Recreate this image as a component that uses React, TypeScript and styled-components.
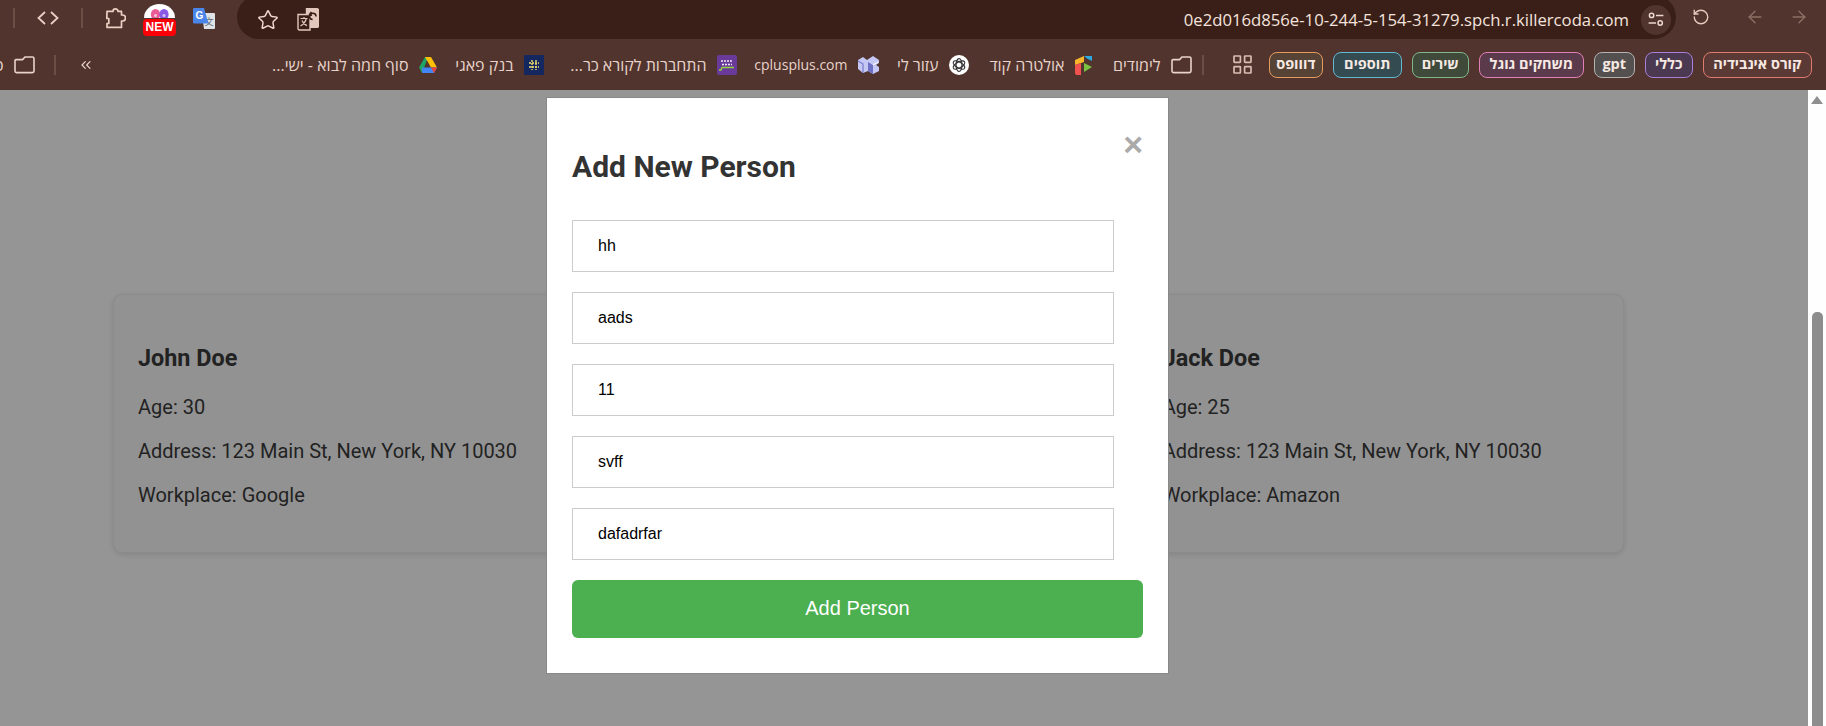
import React from "react";
import styled, { createGlobalStyle } from "styled-components";
import { ArrowLeft, ArrowRight, ChevronsRight, RotateCcw, Star } from "lucide-react";

const chips = [
  { label: "קורס אינבידיה", border: "#df7b6e", bg: "#5b3a35", width: 110 },
  { label: "כללי", border: "#a97fdc", bg: "#4a3950", width: 48 },
  { label: "gpt", border: "#b3b3b3", bg: "#54504f", width: 42 },
  { label: "משחקים גוגל", border: "#e27fb7", bg: "#5a3a4b", width: 105 },
  { label: "שירים", border: "#7fb98a", bg: "#3f4a3a", width: 58 },
  { label: "תוספים", border: "#63b9d2", bg: "#344b51", width: 69 },
  { label: "דווופס", border: "#e69b5e", bg: "#564335", width: 55 },
];

const people = [
  { name: "John Doe", age: 30, address: "123 Main St, New York, NY 10030", work: "Google" },
  { name: "Jane Doe", age: 28, address: "123 Main St, New York, NY 10030", work: "Microsoft" },
  { name: "Jack Doe", age: 25, address: "123 Main St, New York, NY 10030", work: "Amazon" },
];

const fields = ["hh", "aads", "11", "svff", "dafadrfar"];

const FolderIcon = () => (
  <svg width="21" height="18" viewBox="0 0 21 18" fill="none" stroke="#e9d3ca" strokeWidth="1.6">
    <path d="M1 4.5 V15 a1.6 1.6 0 0 0 1.6 1.6 H18.4 a1.6 1.6 0 0 0 1.6 -1.6 V2.6 A1.6 1.6 0 0 0 18.4 1 H11 L8.5 3.6 H2 Q1 3.6 1 4.5 Z" />
  </svg>
);

const GridIcon = () => (
  <svg width="19" height="19" viewBox="0 0 19 19" fill="none" stroke="#d9bdb2" strokeWidth="1.7">
    <rect x="1" y="1" width="6.4" height="6.4" rx="0.6" />
    <rect x="11.6" y="1" width="6.4" height="6.4" rx="0.6" />
    <rect x="1" y="11.6" width="6.4" height="6.4" rx="0.6" />
    <rect x="11.6" y="11.6" width="6.4" height="6.4" rx="0.6" />
  </svg>
);

const CodeIcon = () => (
  <svg width="22" height="14" viewBox="0 0 22 14" fill="none" stroke="#eccfc4" strokeWidth="1.8">
    <path d="M8 1 L1.5 7 L8 13 M14 1 L20.5 7 L14 13" />
  </svg>
);

const PuzzleIcon = () => (
  <svg width="21" height="21" viewBox="0 0 21 21" fill="none" stroke="#eccfc4" strokeWidth="1.7" strokeLinejoin="round">
    <path d="M2 3.4 H8 a2.5 2.5 0 0 1 5 0 H16.5 V7 H17.5 a2.9 2.9 0 0 1 0 6 H16.5 V19.4 H2 V15.5 H3.8 V10.5 H1.8 Z" />
  </svg>
);

const DomeLogo = () => (
  <svg width="31" height="14" viewBox="0 0 31 14">
    <defs>
      <clipPath id="dome-clip">
        <path d="M0 14 A15.5 14 0 0 1 31 14 Z" />
      </clipPath>
    </defs>
    <path d="M0 14 A15.5 14 0 0 1 31 14 Z" fill="#fff" />
    <g clipPath="url(#dome-clip)">
      <ellipse cx="11.5" cy="10.5" rx="4.6" ry="5.5" fill="#ea5a94" />
      <ellipse cx="20" cy="10.5" rx="4.6" ry="5.5" fill="#8a58e4" />
      <circle cx="11.5" cy="11.5" r="1.5" fill="#f6c6dc" />
      <circle cx="20" cy="11.5" r="1.5" fill="#d6c4f6" />
    </g>
  </svg>
);

const TranslateLogo = () => (
  <svg width="22" height="21" viewBox="0 0 22 21">
    <path d="M9 5 H21 a1 1 0 0 1 1 1 V20 a1 1 0 0 1 -1 1 H11 Z" fill="#dfe3e6" />
    <text x="16" y="17" fontSize="9" fill="#5b6670" textAnchor="middle" fontFamily="Noto Sans CJK SC, sans-serif">文</text>
    <path d="M1.2 0 H11 L15.5 15.5 H1.2 A1.2 1.2 0 0 1 0 14.3 V1.2 A1.2 1.2 0 0 1 1.2 0 Z" fill="#4a86ea" />
    <text x="6.5" y="11" fontSize="10" fontWeight="700" fill="#fff" textAnchor="middle" fontFamily="Liberation Sans, sans-serif">G</text>
  </svg>
);

const PageTranslateIcon = () => (
  <svg width="22" height="23" viewBox="0 0 22 23" fill="none" stroke="#e3c7bc" strokeWidth="1.4">
    <path d="M9.5 0.7 H20 A1.4 1.4 0 0 1 21.4 2.1 V18 A1.4 1.4 0 0 1 20 19.4 H13 V6 H9.5 Z" fill="#e3c7bc" />
    <path d="M1 6.5 H13 V22 H2.4 A1.4 1.4 0 0 1 1 20.6 Z" fill="#3a1f19" />
    <path d="M3.5 10.5 H10.5 M7 9 V10.5 M9.3 10.5 C8.5 14 6.5 16.3 3.5 18 M5 12.5 C6 15 7.8 16.8 10 17.6" strokeWidth="1.2" />
    <path d="M19 8.5 A3.2 3.2 0 1 0 15.6 11.6 M14.5 4 L12.6 6.2 L15 7.4" stroke="#3a1f19" strokeWidth="1.5" />
  </svg>
);

const TuneIcon = () => (
  <svg width="16" height="15" viewBox="0 0 16 15" fill="none" stroke="#ecd6cd" strokeWidth="1.5">
    <circle cx="3.6" cy="3.4" r="2.2" />
    <path d="M8 3.4 H15.4 M0.6 11 H8" />
    <circle cx="12.2" cy="11" r="2.2" />
  </svg>
);

const DriveLogo = () => (
  <svg width="18" height="16" viewBox="0 0 18 16">
    <path d="M6 0 H9 L3.2 16 L0 10.4 Z" fill="#1fa463" />
    <path d="M6 0 H12 L18 10.4 H12 Z" fill="#ffc107" />
    <path d="M3.2 10.4 H18 L15 16 H3 Z" fill="#4285f4" />
    <path d="M12 10.4 H18 L15 16 Z" fill="#e94335" />
  </svg>
);

const BankLogo = () => (
  <svg width="20" height="20" viewBox="0 0 20 20">
    <rect width="20" height="20" rx="1" fill="#14285f" />
    <g fill="none" stroke="#f4e16c" strokeWidth="1.4">
      <path d="M8 5 V15 M12 5 V15 M5 8 H15 M5 12 H15" strokeDasharray="2 1" />
    </g>
  </svg>
);

const ReaderLogo = () => (
  <svg width="20" height="20" viewBox="0 0 20 20">
    <rect width="20" height="20" rx="2" fill="#6a3a9a" />
    <path d="M4 6 H16 M5 9.5 H15" stroke="#f0e9f5" strokeWidth="1.6" strokeDasharray="2 1" />
    <path d="M2 15 H4 L5 12.5 H17" fill="none" stroke="#8ed23c" strokeWidth="1.4" />
  </svg>
);

const CplusplusLogo = () => (
  <svg width="21" height="18" viewBox="0 0 21 18">
    <path d="M0 4 L5 1 L9 4 L15 0 L21 4 V7 L18 9 L21 11 V15 L15 18 L10 15 L5 17 L0 13 Z" fill="#c5c8f5" />
    <path d="M10 6 L15 9 V18 L10 15 Z" fill="#6d70c4" />
    <path d="M0 5 L5 8 V17" fill="none" stroke="#8285d0" strokeWidth="1.4" />
    <path d="M15 9 L20 6" fill="none" stroke="#f4f4ff" strokeWidth="1.4" />
  </svg>
);

const GptLogo = () => (
  <svg width="20" height="20" viewBox="0 0 20 20">
    <circle cx="10" cy="10" r="10" fill="#fff" />
    <g fill="none" stroke="#333" strokeWidth="1.2">
      <ellipse cx="10" cy="10" rx="3" ry="6.4" />
      <ellipse cx="10" cy="10" rx="3" ry="6.4" transform="rotate(60 10 10)" />
      <ellipse cx="10" cy="10" rx="3" ry="6.4" transform="rotate(120 10 10)" />
    </g>
  </svg>
);

const AlteraLogo = () => (
  <svg width="17" height="20" viewBox="0 0 17 20">
    <path d="M0 5 L9 1 V7 L0 10 Z" fill="#f8b62b" />
    <path d="M9 1 L17 1 V6 L12 3.5 Z" fill="#2fa8e0" />
    <path d="M0 10 L6 8 V20 H2 Q0 20 0 18 Z" fill="#f0524f" />
    <path d="M9 8 L17 12 L9 17 Z" fill="#7cc242" />
  </svg>
);

const bookmarks = [
  { label: "לימודים", icon: <FolderIcon />, width: 48, size: 16, after: 11 },
  { label: "אולטרה קוד", icon: <AlteraLogo />, width: 76, size: 16, after: 10 },
  { label: "עזור לי", icon: <GptLogo />, width: 41, size: 16, after: 9 },
  { label: "cplusplus.com", icon: <CplusplusLogo />, width: 91, size: 14, after: 10 },
  { label: "התחברות לקורא כר...", icon: <ReaderLogo />, width: 138, size: 16, after: 15 },
  { label: "בנק פאגי", icon: <BankLogo />, width: 56, size: 16, after: 11 },
  { label: "סוף חמה לבוא - ישי...", icon: <DriveLogo />, width: 136, size: 16, after: 0 },
];

const App = () => (
  <Shell>
    <GlobalStyle />
    <TopBar>
      <ToolSide>
        <Divider />
        <ToolIcon $left={22} $right={22}>
          <CodeIcon />
        </ToolIcon>
        <Divider />
        <ToolIcon $left={22} $right={0}>
          <PuzzleIcon />
        </ToolIcon>
        <NewExtension>
          <DomeLogo />
          <NewBadge>NEW</NewBadge>
        </NewExtension>
        <ToolIcon $left={17} $right={0}>
          <TranslateLogo />
        </ToolIcon>
      </ToolSide>
      <AddressPill>
        <PillIcons>
          <Star size={22} strokeWidth={1.6} color="#f0d9cf" />
          <PageTranslateIcon />
        </PillIcons>
        <Url>0e2d016d856e-10-244-5-154-31279.spch.r.killercoda.com</Url>
        <TuneButton>
          <TuneIcon />
        </TuneButton>
      </AddressPill>
      <NavSide>
        <RotateCcw size={18} strokeWidth={1.8} color="#e8c9bd" />
        <BackArrow>
          <ArrowLeft size={20} strokeWidth={1.7} color="#8d6f65" />
        </BackArrow>
        <ArrowRight size={20} strokeWidth={1.7} color="#8d6f65" />
      </NavSide>
    </TopBar>
    <BookmarkBar>
      {chips.map((chip) => (
        <Chip key={chip.label} $border={chip.border} $bg={chip.bg} $width={chip.width}>
          {chip.label}
        </Chip>
      ))}
      <AppsSlot>
        <GridIcon />
      </AppsSlot>
      <Divider />
      {bookmarks.map((item) => (
        <Bookmark key={item.label} $after={item.after}>
          {item.icon}
          <BookmarkLabel $width={item.width} $size={item.size}>
            {item.label}
          </BookmarkLabel>
        </Bookmark>
      ))}
      <MoreSlot>
        <ChevronsRight size={16} strokeWidth={1.8} color="#e9d3ca" style={{ transform: "scaleX(-1)" }} />
      </MoreSlot>
      <EndDivider />
      <Bookmark $after={0}>
        <FolderIcon />
        <BookmarkLabel $width={60} $size={16}>
          סרטונים
        </BookmarkLabel>
      </Bookmark>
    </BookmarkBar>
    <Viewport>
      <Page>
        <CardGrid>
          {people.map((person) => (
            <Card key={person.name}>
              <CardName>{person.name}</CardName>
              <CardLine>Age: {person.age}</CardLine>
              <CardLine>Address: {person.address}</CardLine>
              <CardLine>Workplace: {person.work}</CardLine>
            </Card>
          ))}
        </CardGrid>
        <Overlay>
          <Modal>
            <CloseButton>×</CloseButton>
            <ModalTitle>Add New Person</ModalTitle>
            <Form>
              {fields.map((value) => (
                <Field key={value} type="text" defaultValue={value} />
              ))}
              <Submit type="button">Add Person</Submit>
            </Form>
          </Modal>
        </Overlay>
      </Page>
      <Scrollbar>
        <ScrollArrow />
        <ScrollThumb />
      </Scrollbar>
    </Viewport>
  </Shell>
);

export default App;

const GlobalStyle = createGlobalStyle`
  html, body {
    margin: 0;
    height: 100%;
    overflow: hidden;
    background: #959595;
  }
  * {
    box-sizing: border-box;
  }
`;

const Shell = styled.div`
  display: flex;
  flex-direction: column;
  height: 726px;
  width: 1826px;
  overflow: hidden;
  font-family: "Open Sans", "Liberation Sans", sans-serif;
`;

const TopBar = styled.div`
  display: flex;
  align-items: flex-start;
  height: 39px;
  background: #50342d;
  flex-shrink: 0;
`;

const ToolSide = styled.div`
  display: flex;
  align-items: center;
  height: 36px;
  width: 237px;
  padding-left: 13px;
`;

const Divider = styled.div`
  width: 2px;
  height: 20px;
  background: #6c4e45;
  flex-shrink: 0;
`;

const EndDivider = styled(Divider)`
  margin-left: 9px;
`;

const ToolIcon = styled.div<{ $left: number; $right: number }>`
  display: flex;
  align-items: center;
  justify-content: center;
  margin: 0 ${(p) => p.$right}px 0 ${(p) => p.$left}px;
`;

const NewExtension = styled.div`
  display: flex;
  flex-direction: column;
  align-items: center;
  width: 33px;
  height: 33px;
  margin-left: 17px;
  align-self: flex-start;
  margin-top: 4px;
`;

const NewBadge = styled.div`
  width: 33px;
  height: 17px;
  margin-top: 1px;
  border-radius: 4px;
  background: #fb0007;
  color: #fff;
  font: 700 12px/17px "Liberation Sans", sans-serif;
  text-align: center;
`;

const AddressPill = styled.div`
  display: flex;
  align-items: center;
  width: 1439px;
  height: 44px;
  margin-top: -5px;
  padding: 0 5px 0 20px;
  border-radius: 22px;
  background: #3a1f19;
  flex-shrink: 0;
`;

const PillIcons = styled.div`
  display: flex;
  align-items: center;
  gap: 18px;
  margin-top: 5px;
`;

const Url = styled.div`
  flex: 1;
  margin-top: 5px;
  padding-right: 12px;
  text-align: right;
  font-size: 16.7px;
  color: #f4e4dd;
  white-space: nowrap;
`;

const TuneButton = styled.div`
  display: flex;
  align-items: center;
  justify-content: center;
  width: 30px;
  height: 30px;
  margin-top: 5px;
  border-radius: 50%;
  background: #50342d;
`;

const NavSide = styled.div`
  display: flex;
  align-items: center;
  height: 34px;
  flex: 1;
  padding-left: 16px;
  gap: 24px;
`;

const BackArrow = styled.div`
  display: flex;
  margin-left: 11px;
`;

const BookmarkBar = styled.div`
  display: flex;
  direction: rtl;
  align-items: center;
  height: 51px;
  padding: 0 14px 0 0;
  gap: 10px;
  background: #50342d;
  overflow: hidden;
  flex-shrink: 0;
`;

const Chip = styled.div<{ $border: string; $bg: string; $width: number }>`
  width: ${(p) => p.$width - 0.5}px;
  height: 26px;
  border: 1.5px solid ${(p) => p.$border};
  border-radius: 8px;
  background: ${(p) => p.$bg};
  color: #f6e9e3;
  font-size: 14.5px;
  font-weight: 700;
  line-height: 22px;
  text-align: center;
  white-space: nowrap;
  flex-shrink: 0;
`;

const AppsSlot = styled.div`
  display: flex;
  margin: 0 7px 0 19px;
  flex-shrink: 0;
`;

const Bookmark = styled.div<{ $after: number }>`
  display: flex;
  align-items: center;
  gap: 10px;
  margin-left: ${(p) => p.$after}px;
  color: #e7d3cb;
  white-space: nowrap;
  flex-shrink: 0;
`;

const BookmarkLabel = styled.span<{ $width: number; $size: number }>`
  display: block;
  width: ${(p) => p.$width}px;
  font-size: ${(p) => p.$size}px;
`;

const MoreSlot = styled.div`
  display: flex;
  margin: 0 169px 0 12px;
  flex-shrink: 0;
`;

const Viewport = styled.div`
  display: flex;
  flex: 1;
  min-height: 0;
`;

const Page = styled.div`
  position: relative;
  flex: 1;
  padding: 204px 184px 0 113px;
  background: #959595;
`;

const CardGrid = styled.div`
  display: grid;
  grid-template-columns: repeat(3, 1fr);
  gap: 26px;
  font-family: Roboto, sans-serif;
`;

const Card = styled.div`
  height: 259px;
  padding: 50px 24px 0;
  border: 1px solid #8b8b8b;
  border-radius: 9px;
  background: #929292;
  box-shadow: 0 2px 5px rgba(0, 0, 0, 0.1);
  color: #222;
`;

const CardName = styled.h3`
  margin: 0 0 24px;
  font-size: 23.4px;
  line-height: 26px;
  font-weight: 700;
`;

const CardLine = styled.p`
  margin: 0 0 20px;
  font-size: 20px;
  line-height: 24px;
`;

const Overlay = styled.div`
  position: absolute;
  inset: 0;
  padding: 7px 0 0 546px;
`;

const Modal = styled.div`
  position: relative;
  width: 623px;
  height: 577px;
  padding: 0 25px;
  border: 1px solid #888;
  background: #fff;
`;

const CloseButton = styled.div`
  position: absolute;
  top: 26px;
  right: 25px;
  color: #aaa;
  font: 700 34px/40px "Liberation Sans", sans-serif;
`;

const ModalTitle = styled.h2`
  margin: 0;
  padding: 52px 0 36px;
  color: #333;
  font: 700 30px/34px Roboto, sans-serif;
`;

const Form = styled.div`
  display: flex;
  flex-direction: column;
  align-items: flex-start;
  gap: 20px;
`;

const Field = styled.input`
  width: 542px;
  height: 52px;
  padding: 0 25px;
  border: 1px solid #ccc;
  border-radius: 0;
  outline: none;
  color: #000;
  background: #fff;
  font: 16px "Liberation Sans", sans-serif;
`;

const Submit = styled.button`
  width: 571px;
  height: 58px;
  padding: 0 0 2px;
  border: none;
  border-radius: 6px;
  background: #4caf50;
  color: #fff;
  font: 20px "Liberation Sans", sans-serif;
`;

const Scrollbar = styled.div`
  display: flex;
  flex-direction: column;
  align-items: center;
  width: 18px;
  padding-top: 6px;
  background: #fefefe;
`;

const ScrollArrow = styled.div`
  width: 0;
  height: 0;
  border-left: 6px solid transparent;
  border-right: 6px solid transparent;
  border-bottom: 8px solid #8f8f8f;
`;

const ScrollThumb = styled.div`
  width: 11px;
  flex: 1;
  margin-top: 208px;
  border-radius: 5px 5px 0 0;
  background: #8d8d8d;
`;
